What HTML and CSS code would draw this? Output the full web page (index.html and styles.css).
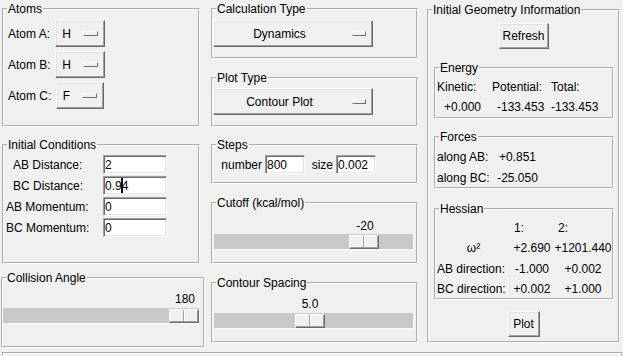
FILE: index.html
```html
<!DOCTYPE html>
<html>
<head>
<meta charset="utf-8">
<title>Reaction Dynamics</title>
<link rel="stylesheet" href="styles.css">
</head>
<body>
<div class="app">
  <div class="col">
    <fieldset class="grp g-atoms">
      <legend>Atoms</legend>
      <div class="atom-grid">
        <span class="lbl">Atom A:</span>
        <button class="mb mb-atom"><span>H</span><span class="ind"></span></button>
        <span class="lbl">Atom B:</span>
        <button class="mb mb-atom"><span>H</span><span class="ind"></span></button>
        <span class="lbl">Atom C:</span>
        <button class="mb mb-atom"><span>F</span><span class="ind"></span></button>
      </div>
    </fieldset>
    <fieldset class="grp g-init">
      <legend>Initial Conditions</legend>
      <div class="form-grid">
        <span class="lbl indent">AB Distance:</span><span class="entry">2</span>
        <span class="lbl indent">BC Distance:</span><span class="entry">0.9<span class="caret"></span>4</span>
        <span class="lbl">AB Momentum:</span><span class="entry">0</span>
        <span class="lbl">BC Momentum:</span><span class="entry">0</span>
      </div>
    </fieldset>
    <fieldset class="grp g-coll">
      <legend>Collision Angle</legend>
      <div class="scale s-coll">
        <div class="sval"><span style="left:182px">180</span></div>
        <div class="trough"><span class="thumb" style="left:165px"></span></div>
      </div>
    </fieldset>
  </div>

  <div class="col">
    <fieldset class="grp mid g-calc">
      <legend>Calculation Type</legend>
      <button class="mb mb-wide"><span class="txt">Dynamics</span><span class="ind"></span></button>
    </fieldset>
    <fieldset class="grp mid g-plot">
      <legend>Plot Type</legend>
      <button class="mb mb-wide"><span class="txt">Contour Plot</span><span class="ind"></span></button>
    </fieldset>
    <fieldset class="grp mid g-steps">
      <legend>Steps</legend>
      <div class="steps-row">
        <span class="slbl s-num">number</span><span class="entry e-sm">800</span>
        <span class="slbl s-size">size</span><span class="entry e-sm">0.002</span>
      </div>
    </fieldset>
    <fieldset class="grp mid g-cut">
      <legend>Cutoff (kcal/mol)</legend>
      <div class="scale s-mid s-cut">
        <div class="sval"><span style="left:151px">-20</span></div>
        <div class="trough"><span class="thumb" style="left:134px"></span></div>
      </div>
    </fieldset>
    <fieldset class="grp mid g-cont">
      <legend>Contour Spacing</legend>
      <div class="scale s-mid s-cont">
        <div class="sval"><span style="left:96px">5.0</span></div>
        <div class="trough"><span class="thumb" style="left:80px"></span></div>
      </div>
    </fieldset>
  </div>

  <div class="col">
    <fieldset class="grp g-geo">
      <legend>Initial Geometry Information</legend>
      <button class="btn b-refresh">Refresh</button>
      <fieldset class="grp sub g-energy">
        <legend>Energy</legend>
        <div class="energy-grid">
          <span>Kinetic:</span><span>Potential:</span><span>Total:</span>
          <span class="o7">+0.000</span><span class="o5">-133.453</span><span>-133.453</span>
        </div>
      </fieldset>
      <fieldset class="grp sub g-forces">
        <legend>Forces</legend>
        <div class="forces-grid">
          <span>along AB:</span><span class="c">+0.851</span>
          <span>along BC:</span><span class="c">-25.050</span>
        </div>
      </fieldset>
      <fieldset class="grp sub g-hess">
        <legend>Hessian</legend>
        <div class="hess-grid">
          <span></span><span class="h">1:</span><span class="h">2:</span>
          <span class="c">ω²</span><span class="c">+2.690</span><span class="c">+1201.440</span>
          <span>AB direction:</span><span class="c">-1.000</span><span class="c">+0.002</span>
          <span>BC direction:</span><span class="c">+0.002</span><span class="c">+1.000</span>
        </div>
      </fieldset>
      <button class="btn b-plot">Plot</button>
    </fieldset>
  </div>
</div>
<div class="status"></div>
</body>
</html>
```

FILE: styles.css
```css
* { box-sizing: border-box; }
html, body { margin: 0; padding: 0; }
body {
  background: #f0f0f0;
  font: 12px/16px "Liberation Sans", Arial, sans-serif;
  color: #000;
  width: 623px;
  height: 356px;
  overflow: hidden;
}
.app {
  display: grid;
  grid-template-columns: 205px 222px 196px;
  align-items: start;
}
.col { display: flex; flex-direction: column; align-items: flex-start; }

/* labelled frames */
.grp {
  display: block;
  margin: 0;
  padding: 0;
  min-width: 0;
  border: 2px groove #fff;
}
.grp > legend { margin-left: 3px; padding: 0 1px; line-height: 16px; }

.g-atoms { margin: 1px 0 0 2px; width: 198px; height: 126px; }
.g-init  { margin: 10px 0 0 2px; width: 198px; height: 127px; }
.g-coll  { margin: 6px 0 0 1px; width: 204px; height: 78px; }

.mid { margin-left: 6px; width: 207px; }
.g-calc  { margin-top: 1px; height: 58px; }
.g-plot  { margin-top: 11px; height: 57px; }
.g-steps { margin-top: 10px; height: 47px; }
.g-cut   { margin-top: 11px; height: 69px; }
.g-cont  { margin-top: 11px; height: 68px; }

.g-geo {
  margin-top: 2px; width: 193px; height: 341px;
  display: flex; flex-direction: column; align-items: flex-start;
}
.sub { margin-left: 5px; width: 180px; }
.g-energy { margin-top: 11px; height: 59px; }
.g-forces { margin-top: 10px; height: 60px; }
.g-hess   { margin-top: 12px; height: 99px; }

/* raised buttons */
.mb, .btn {
  font: inherit;
  color: #000;
  margin: 0;
  background: #f0f0f0;
  border: 1px solid;
  border-color: #fff #696969 #696969 #fff;
  box-shadow: inset -1px -1px 0 #a0a0a0, inset 1px 1px 0 #e3e3e3;
  display: flex;
  align-items: center;
}
.mb { height: 27px; }
.ind {
  display: block;
  height: 5px;
  background: #f0f0f0;
  border: 1px solid;
  border-color: #fff #6d6d6d #6d6d6d #fff;
}
.mb-atom { padding: 0 6px 0 6px; justify-self: center; }
.mb-atom .ind { width: 15px; margin-left: 12px; }
.mb-wide { width: 160px; padding: 0 6px 0 0; margin-top: 3px; }
.g-plot .mb-wide { margin-top: 2px; }
.mb-wide .txt { flex: 1; text-align: center; }
.mb-wide .ind { width: 14px; margin-left: 7px; }

.btn { justify-content: center; height: 26px; padding: 0; align-self: center; }
.b-refresh { width: 50px; margin-top: 5px; }
.b-plot { width: 32px; margin-top: 11px; }

/* atoms */
.atom-grid {
  display: grid;
  grid-template-columns: 49px 50px;
  grid-auto-rows: 27px;
  row-gap: 4px;
  align-items: center;
  padding: 3px 0 0 2px;
}

/* entries */
.entry {
  display: flex;
  align-items: center;
  height: 19px;
  width: 64px;
  background: #fff;
  padding-left: 1px;
  border: 1px solid;
  border-color: #a0a0a0 #fff #fff #a0a0a0;
  box-shadow: inset 1px 1px 0 #696969, inset -1px -1px 0 #e3e3e3;
  white-space: nowrap;
}
.caret {
  display: inline-block;
  width: 2px;
  height: 15px;
  background: #000;
  margin: 0 -1px 0 -1px;
}
.form-grid {
  display: grid;
  grid-template-columns: 99px 64px;
  grid-auto-rows: 19px;
  row-gap: 2px;
  align-items: center;
  padding-top: 2px;
}
.lbl { padding-left: 2px; white-space: nowrap; }
.lbl.indent { padding-left: 9px; }

/* steps */
.steps-row { display: flex; align-items: center; padding-top: 2px; }
.slbl { text-align: right; padding-right: 3px; }
.s-num { width: 52px; }
.s-size { width: 31px; }
.e-sm { width: 40px; }

/* scales */
.sval { position: relative; height: 16px; }
.sval span { position: absolute; top: 0; transform: translateX(-50%); white-space: nowrap; }
.trough {
  position: relative;
  height: 16px;
  background: #c8c8c8;
  border: 1px solid;
  border-color: #c8c8c8 #fff #fff #c8c8c8;
}
.thumb {
  position: absolute;
  top: 0;
  width: 30px;
  height: 14px;
  background: linear-gradient(to right, transparent 13px, #a0a0a0 13px 14px, #fff 14px 15px, transparent 15px) #f0f0f0;
  border: 1px solid;
  border-color: #fff #696969 #696969 #fff;
  box-shadow: inset -1px -1px 0 #a0a0a0;
}
.s-coll { padding-top: 5px; margin-right: 3px; }
.s-coll .trough { margin-top: 1px; }
.s-mid { margin: 0 2px 0 1px; }
.s-cut { padding-top: 7px; }
.s-cont { padding-top: 5px; }
.s-cont .trough { margin-top: 1px; }

/* info grids */
.energy-grid {
  display: grid;
  grid-template-columns: 55px 59px auto;
  grid-auto-rows: 16px;
  row-gap: 4px;
  padding: 3px 0 0 1px;
  white-space: nowrap;
}
.o7 { padding-left: 7px; }
.o5 { padding-left: 5px; }
.forces-grid {
  display: grid;
  grid-template-columns: 56px 49px;
  grid-auto-rows: 16px;
  row-gap: 5px;
  padding: 4px 0 0 1px;
  white-space: nowrap;
}
.hess-grid {
  display: grid;
  grid-template-columns: 73px 44px 58px;
  grid-auto-rows: 16px;
  row-gap: 4.33px;
  padding: 3px 0 0 1px;
  white-space: nowrap;
}
.c { text-align: center; }
.h { padding-left: 4px; }

.status {
  margin: 4px 0 0 2px;
  width: 621px;
  height: 20px;
  border: 2px groove #fff;
}
```
